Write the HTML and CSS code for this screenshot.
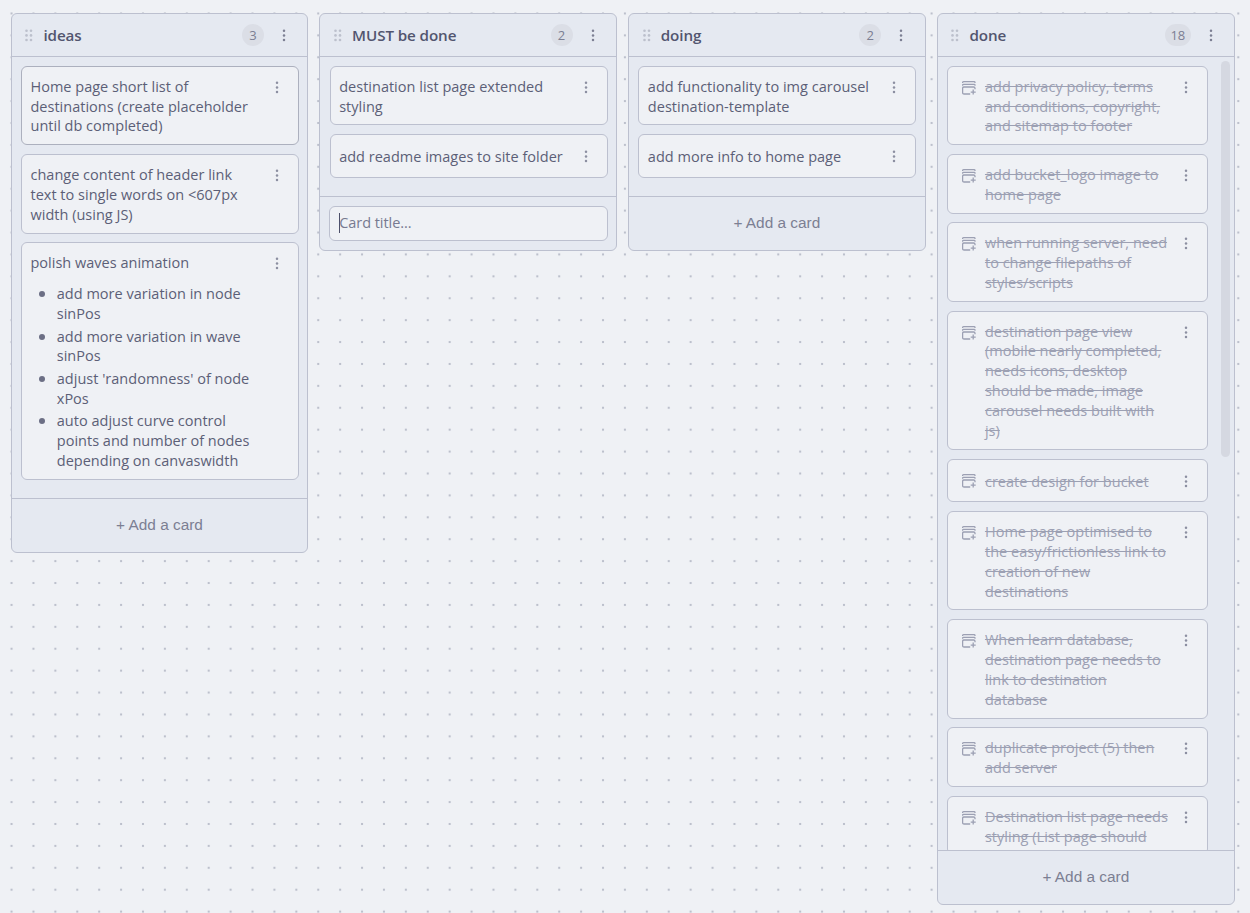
FILE: index.html
```html
<!DOCTYPE html>
<html lang="en">
<head>
<meta charset="utf-8">
<title>Board</title>
<link rel="stylesheet" href="styles.css">
</head>
<body>
<svg class="sprite" aria-hidden="true">
  <symbol id="dots" viewBox="0 0 16 16"><circle cx="8" cy="2.8" r="1.25"/><circle cx="8" cy="7.4" r="1.25"/><circle cx="8" cy="12" r="1.25"/></symbol>
  <symbol id="grip" viewBox="0 0 8 13"><circle cx="1.5" cy="1.8" r="1.3"/><circle cx="6" cy="1.8" r="1.3"/><circle cx="1.5" cy="6.4" r="1.3"/><circle cx="6" cy="6.4" r="1.3"/><circle cx="1.5" cy="11" r="1.3"/><circle cx="6" cy="11" r="1.3"/></symbol>
  <symbol id="archive" viewBox="0 0 14 14"><path d="M.6 2.1V1.5Q.6.7 1.5.7h10.6q.9 0 .9.8v.6M.6 4.7V4.1q0-.7.9-.7h10.6q.9 0 .9.7v.6M8.2 13H2Q.6 13 .6 11.7V7.3Q.6 6 2 6h9.6Q13 6 13 7.3v1M11.2 8.6v5M8.7 11.1h5"/></symbol>
</svg>
<main class="board">
  <section class="lane">
    <header class="lane-head"><svg class="grip"><use href="#grip"/></svg><h2>ideas</h2><span class="count">3</span><svg class="menu"><use href="#dots"/></svg></header>
    <div class="cards">
      <article class="card active"><div class="text">Home page short list of<br>destinations (create placeholder<br>until db completed)</div><svg class="menu"><use href="#dots"/></svg></article>
      <article class="card"><div class="text">change content of header link<br>text to single words on &lt;607px<br>width (using JS)</div><svg class="menu"><use href="#dots"/></svg></article>
      <article class="card"><div class="text">polish waves animation
        <ul>
          <li>add more variation in node<br>sinPos</li>
          <li>add more variation in wave<br>sinPos</li>
          <li>adjust 'randomness' of node<br>xPos</li>
          <li>auto adjust curve control<br>points and number of nodes<br>depending on canvaswidth</li>
        </ul></div><svg class="menu"><use href="#dots"/></svg></article>
    </div>
    <footer class="lane-foot"><button>+ Add a card</button></footer>
  </section>
  <section class="lane">
    <header class="lane-head"><svg class="grip"><use href="#grip"/></svg><h2>MUST be done</h2><span class="count">2</span><svg class="menu"><use href="#dots"/></svg></header>
    <div class="cards">
      <article class="card"><div class="text">destination list page extended<br>styling</div><svg class="menu"><use href="#dots"/></svg></article>
      <article class="card single"><div class="text">add readme images to site folder</div><svg class="menu"><use href="#dots"/></svg></article>
    </div>
    <footer class="lane-foot"><div class="entry"><span class="caret"></span>Card title...</div></footer>
  </section>
  <section class="lane">
    <header class="lane-head"><svg class="grip"><use href="#grip"/></svg><h2>doing</h2><span class="count">2</span><svg class="menu"><use href="#dots"/></svg></header>
    <div class="cards">
      <article class="card"><div class="text">add functionality to img carousel<br>destination-template</div><svg class="menu"><use href="#dots"/></svg></article>
      <article class="card single"><div class="text">add more info to home page</div><svg class="menu"><use href="#dots"/></svg></article>
    </div>
    <footer class="lane-foot"><button>+ Add a card</button></footer>
  </section>
  <section class="lane done">
    <header class="lane-head"><svg class="grip"><use href="#grip"/></svg><h2>done</h2><span class="count">18</span><svg class="menu"><use href="#dots"/></svg></header>
    <div class="scroll">
      <div class="cards">
        <article class="card"><svg class="archive"><use href="#archive"/></svg><div class="text">add privacy policy, terms<br>and conditions, copyright,<br>and sitemap to footer</div><svg class="menu"><use href="#dots"/></svg></article>
        <article class="card"><svg class="archive"><use href="#archive"/></svg><div class="text">add bucket_logo image to<br>home page</div><svg class="menu"><use href="#dots"/></svg></article>
        <article class="card"><svg class="archive"><use href="#archive"/></svg><div class="text">when running server, need<br>to change filepaths of<br>styles/scripts</div><svg class="menu"><use href="#dots"/></svg></article>
        <article class="card"><svg class="archive"><use href="#archive"/></svg><div class="text">destination page view<br>(mobile nearly completed,<br>needs icons, desktop<br>should be made, image<br>carousel needs built with<br>js)</div><svg class="menu"><use href="#dots"/></svg></article>
        <article class="card single"><svg class="archive"><use href="#archive"/></svg><div class="text">create design for bucket</div><svg class="menu"><use href="#dots"/></svg></article>
        <article class="card"><svg class="archive"><use href="#archive"/></svg><div class="text">Home page optimised to<br>the easy/frictionless link to<br>creation of new<br>destinations</div><svg class="menu"><use href="#dots"/></svg></article>
        <article class="card"><svg class="archive"><use href="#archive"/></svg><div class="text">When learn database,<br>destination page needs to<br>link to destination<br>database</div><svg class="menu"><use href="#dots"/></svg></article>
        <article class="card"><svg class="archive"><use href="#archive"/></svg><div class="text">duplicate project (5) then<br>add server</div><svg class="menu"><use href="#dots"/></svg></article>
        <article class="card"><svg class="archive"><use href="#archive"/></svg><div class="text">Destination list page needs<br>styling (List page should</div><svg class="menu"><use href="#dots"/></svg></article>
      </div>
      <div class="track"><div class="thumb"></div></div>
    </div>
    <footer class="lane-foot"><button>+ Add a card</button></footer>
  </section>
</main>
</body>
</html>
```
FILE: styles.css
```css
* { box-sizing: border-box; }
body {
  margin: 0;
  height: 913px;
  overflow: hidden;
  background: #eff1f5;
  color: #5c5f77;
  font-family: "Open Sans", "Noto Sans", sans-serif;
  font-size: 14.5px;
  line-height: 19.93px;
}
.sprite { position: absolute; width: 0; height: 0; }
.board {
  height: 913px;
  padding: 13px 0 0 10.8px;
  display: flex;
  align-items: flex-start;
  gap: 11.3px;
  background: radial-gradient(circle at center, #bcc0cc 0.9px, transparent 1.6px) 0.6px 2.5px / 21.91px 21.91px;
}
.board::before {
  content: "";
  position: absolute;
  inset: 0 0 auto 0;
  height: 12px;
  background: #eff1f5;
}
.lane {
  position: relative;
  width: 297.4px;
  flex: none;
  display: flex;
  flex-direction: column;
  background: #e5e9f1;
  border: 1px solid #bcc0cf;
  border-radius: 6px;
}
.lane-head {
  height: 43px;
  flex: none;
  display: flex;
  align-items: center;
  border-bottom: 1px solid #bcc0cf;
  padding: 0 15.3px 0 13.6px;
}
.grip { width: 8px; height: 13px; fill: #bcc0cc; margin-right: 10px; }
h2 { margin: 1.4px auto 0 0; font-size: 15.2px; font-weight: 550; color: #52556f; letter-spacing: -0.1px; }
.count {
  min-width: 22px;
  height: 22px;
  padding: 0 5.3px;
  border-radius: 11px;
  background: #dbdee6;
  color: #7c7f93;
  font-size: 13px;
  font-weight: 500;
  line-height: 22px;
  text-align: center;
  margin-right: 12px;
}
.menu { width: 16px; height: 16px; flex: none; fill: #7c7f93; }
.lane-head .menu { margin-top: 1px; }
.cards { padding: 8.8px 8.3px 18px 9.2px; display: flex; flex-direction: column; gap: 8.9px; }
.card {
  display: flex;
  align-items: flex-start;
  background: #eff1f5;
  border: 1px solid #bcc0cf;
  border-radius: 6px;
  padding: 9.8px 13px 7.8px 8.5px;
}
.card.active { border-color: #acb0be; }
.card .menu { margin-top: 3px; fill: #8c8fa1; }
.text { flex: 1; min-width: 0; white-space: nowrap; letter-spacing: 0.01px; }
.single { height: 43.8px; padding-top: 11.8px; }
.single .menu { margin-top: 2px; }
ul { margin: 11px 0 0; padding: 0 0 0 26.3px; display: grid; gap: 2.5px; list-style: none; }
li { position: relative; }
li::before {
  content: "";
  position: absolute;
  left: -18px;
  top: 7px;
  width: 6px;
  height: 6px;
  border-radius: 50%;
  background: #6c6f85;
}
.lane-foot {
  height: 54px;
  flex: none;
  border-top: 1px solid #bcc0cf;
  padding: 9px 8px;
}
button {
  width: 100%;
  height: 34.8px;
  padding: 0;
  border: 0;
  background: none;
  color: #7c7f93;
  font: 15.4px "Liberation Sans", Arial, sans-serif;
}
.entry {
  height: 35px;
  display: flex;
  align-items: center;
  border: 1px solid #bcc0cf;
  border-radius: 6px;
  background: #eff1f5;
  color: #777a90;
  margin-left: 0.4px;
  padding-left: 9.3px;
  letter-spacing: -0.05px;
}
.caret { width: 1px; height: 20px; background: #4c4f69; margin-right: -1px; }
.done { height: 892px; width: 298px; }
.scroll { flex: 1; min-height: 0; display: flex; overflow: hidden; }
.done .cards { width: 270.2px; flex: none; padding-right: 0; }
.done .text { color: #9ca0b3; text-decoration: line-through; letter-spacing: 0.02px; }
.done .card { flex: none; padding-left: 13.5px; }
.done .single { height: 43.2px; padding-top: 11.8px; }
.archive { width: 14px; height: 14px; flex: none; margin: 4px 9.4px 0 0; fill: none; stroke: #9ca0b3; stroke-width: 1.3; }
.done .single .archive { margin-top: 2px; }
.track { margin-left: 13px; padding-top: 4px; }
.thumb { width: 9px; height: 396px; border-radius: 5px; background: #d5d8e1; }
```
